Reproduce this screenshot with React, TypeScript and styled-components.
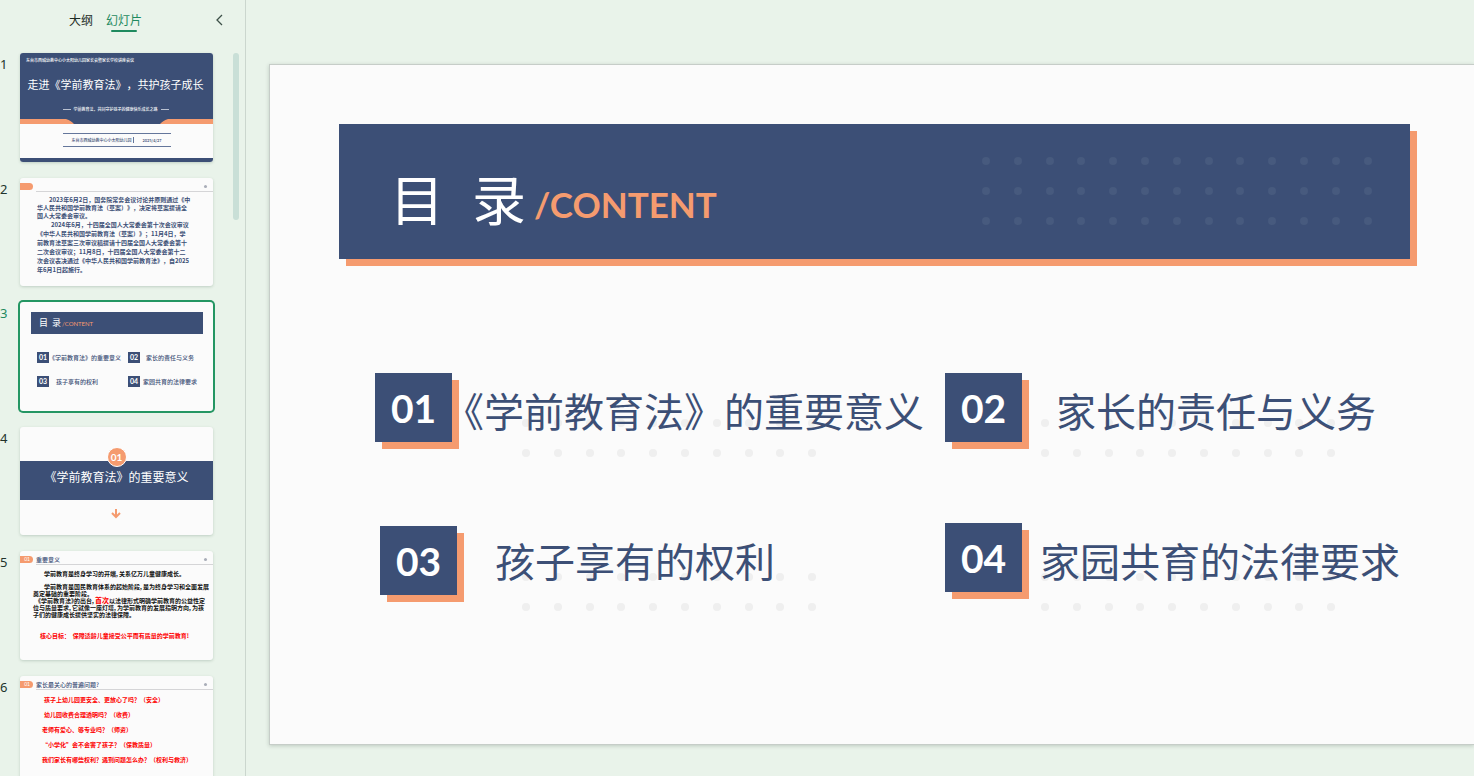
import React from "react";
import styled, { createGlobalStyle } from "styled-components";

const navy = "#3c4f76";
const orange = "#f59b6f";
const paper = "#fbfbfb";
const green = "#1f8a5f";
const cjk = '"Noto Sans CJK SC", sans-serif';
const geometric = 'Lato, "Noto Sans CJK SC", sans-serif';

const GlobalStyle = createGlobalStyle`
  * { box-sizing: border-box; }
  body {
    margin: 0;
    background: #e9f3ea;
    font-family: ${cjk};
    color: #22332c;
  }
  button {
    border: 0;
    padding: 0;
    background: none;
    color: inherit;
    font: inherit;
    cursor: pointer;
  }
  h1, h2, ol { margin: 0; padding: 0; font-weight: 400; }
  ol { list-style: none; }
`;

const Workspace = styled.div`
  display: flex;
  height: 100vh;
  overflow: hidden;
`;

/* ---------- side panel ---------- */

const Panel = styled.aside`
  flex: 0 0 246px;
  display: flex;
  flex-direction: column;
  border-right: 1px solid #cbd6ce;
  overflow: hidden;
`;

const PanelHeader = styled.header`
  flex: 0 0 53px;
  display: flex;
  justify-content: space-between;
  align-items: flex-start;
  padding: 10px 22px 0 68px;
`;

const Tabs = styled.nav`
  display: flex;
  gap: 12px;
`;

const Tab = styled.button<{ $active?: boolean }>`
  display: flex;
  flex-direction: column;
  align-items: center;
  font-size: 12px;
  line-height: 20px;
  color: ${(p) => (p.$active ? green : "#1d2b25")};
  &::after {
    content: "";
    width: 26px;
    height: 2px;
    border-radius: 1px;
    background: ${(p) => (p.$active ? green : "transparent")};
    align-self: center;
  }
`;

const Collapse = styled.button`
  display: flex;
  height: 20px;
  align-items: center;
`;

const PanelBody = styled.div`
  display: flex;
  flex: 1;
  min-height: 0;
  justify-content: space-between;
  padding-right: 6px;
`;

const ScrollThumb = styled.div`
  width: 6px;
  height: 167px;
  border-radius: 3px;
  background: #c9dfd7;
`;

const ThumbList = styled.ol`
  display: flex;
  flex-direction: column;
  gap: 16px;
`;

const ThumbRow = styled.li<{ $selected?: boolean }>`
  display: flex;
  font-family: "Noto Sans", sans-serif;
  font-size: 13px;
  line-height: 22px;
  color: ${(p) => (p.$selected ? green : "#22332c")};
`;

const ThumbNumber = styled.span`
  width: 20px;
`;

const Thumb = styled.button<{ $selected?: boolean }>`
  display: flex;
  flex-direction: column;
  align-items: stretch;
  width: 193px;
  aspect-ratio: 16 / 9;
  overflow: hidden;
  border-radius: 3px;
  background: ${paper};
  box-shadow: ${(p) => (p.$selected ? "0 0 0 2px #249663" : "0 1px 3px rgba(40, 80, 60, 0.22)")};
  font-family: ${cjk};
  color: ${navy};
  text-align: left;
  text-spacing-trim: space-all;
  white-space: nowrap;
`;

/* cover */

const CoverTop = styled.span`
  display: flex;
  flex-direction: column;
  height: 66px;
  background: ${navy};
  color: #fff;
`;

const Tiny = styled.span`
  font-size: 4px;
  line-height: 6px;
  font-weight: 500;
`;

const CoverSchool = styled(Tiny)`
  padding: 4px 6px 0;
`;

const CoverTitle = styled.span`
  margin-top: 13px;
  padding-right: 2px;
  text-align: center;
  font-size: 11px;
  line-height: 16px;
`;

const CoverSubtitle = styled(Tiny)`
  display: flex;
  justify-content: center;
  align-items: center;
  gap: 3px;
  margin-top: 14px;
  padding-right: 2px;
  &::before, &::after {
    content: "";
    width: 8px;
    height: 1px;
    background: #b9c1d1;
  }
`;

const CoverInfo = styled(Tiny)`
  display: flex;
  justify-content: center;
  align-items: center;
  align-self: center;
  gap: 8px;
  width: 108px;
  height: 14px;
  margin: 9px 0 11px;
  border: solid #64769b;
  border-width: 1px 0;
`;

const CoverHost = styled.span`
  padding-right: 2px;
  border-right: 1px solid #64769b;
`;

const CoverFoot = styled.span`
  flex: 1;
  background: ${navy};
`;

/* text pages */

const PageHead = styled.span`
  display: flex;
  align-items: flex-start;
  gap: 3px;
  height: 14px;
  padding-top: 5px;
`;

const PageTag = styled.span`
  width: 13px;
  height: 7px;
  padding-right: 3px;
  border-radius: 0 4px 4px 0;
  background: ${orange};
  color: #fff;
  font: 5px/7px ${geometric};
  text-align: right;
`;

const PageTitle = styled.span`
  flex: 1;
  display: flex;
  align-items: center;
  height: 9px;
  padding: 0 6px 1px 0;
  border-bottom: 1px solid #d5d5d7;
  font-size: 6px;
  line-height: 7px;
  font-weight: 500;
  &::after {
    content: "";
    width: 3px;
    height: 3px;
    margin-left: auto;
    border-radius: 50%;
    background: #a9adb8;
  }
`;

const Paragraph = styled.span<{
  $leading: number;
  $left: number;
  $top?: number;
  $color?: string;
  $compact?: boolean;
}>`
  display: block;
  margin-top: ${(p) => p.$top ?? 0}px;
  padding-left: ${(p) => p.$left}px;
  font-size: 6px;
  line-height: ${(p) => p.$leading}px;
  font-weight: 700;
  font-feature-settings: ${(p) => (p.$compact ? '"palt"' : "normal")};
  color: ${(p) => p.$color ?? "inherit"};
`;

const Line = styled.span<{ $indent?: number }>`
  display: block;
  padding-left: ${(p) => p.$indent ?? 0}px;
`;

const Stress = styled.span`
  color: #fe0000;
  font-size: 7px;
`;

/* contents page */

const MiniBanner = styled.span`
  display: flex;
  align-items: center;
  gap: 1px;
  height: 22px;
  margin: 10px 10px 0 11px;
  padding-left: 8px;
  background: ${navy};
  color: #fff;
  font-size: 9px;
  line-height: 12px;
`;

const MiniEnglish = styled.span`
  padding-top: 2px;
  color: ${orange};
  font: 6px/8px ${geometric};
`;

const MiniGrid = styled.span`
  display: grid;
  grid-template-columns: 91px 1fr;
  row-gap: 13px;
  padding: 18px 0 0 17px;
`;

const MiniEntry = styled.span<{ $gap: number }>`
  display: flex;
  align-items: center;
  gap: ${(p) => p.$gap}px;
  font-size: 6px;
  line-height: 11px;
  font-weight: 500;
`;

const MiniNumber = styled.span`
  width: 12px;
  background: ${navy};
  color: #fff;
  font: 700 7px/11px ${geometric};
  text-align: center;
`;

/* section page */

const SectionBand = styled.span`
  display: flex;
  flex-direction: column;
  align-items: center;
  height: 39px;
  margin-top: 34px;
  background: ${navy};
  color: #fff;
  font-size: 12px;
  line-height: 20px;
`;

const SectionBadge = styled.span`
  flex: none;
  width: 20px;
  height: 20px;
  margin-top: -14px;
  border: 1px solid #fff;
  border-radius: 50%;
  background: ${orange};
  font: 700 10px/18px ${geometric};
  text-align: center;
`;

const SectionArrow = styled.svg`
  align-self: center;
  margin: 9px 1px 0 0;
`;

/* ---------- slide ---------- */

const Stage = styled.main`
  flex: 1;
  min-width: 0;
  padding: 64px 0 0 23px;
`;

const Slide = styled.article`
  padding: 59px 64px 145px 69px;
  border: 1px solid #c6cdc8;
  border-right: 0;
  background: ${paper};
  box-shadow: 0 1px 4px rgba(40, 60, 50, 0.22);
`;

const Banner = styled.header`
  display: flex;
  align-items: center;
  justify-content: space-between;
  height: 135px;
  padding: 0 38px 0 51px;
  background: ${navy};
  box-shadow: 7px 7px 0 ${orange};
`;

const BannerTitle = styled.h1`
  display: flex;
  align-items: center;
  padding-top: 12px;
  color: #fff;
  font-size: 54px;
  line-height: 80px;
`;

const TitleWord = styled.span`
  display: flex;
  gap: 28px;
`;

const English = styled.span`
  padding: 12px 0 0 8px;
  color: ${orange};
  font: 700 35px/48px ${geometric};
`;

const Entries = styled.ol`
  display: grid;
  grid-template-columns: 114fr 93fr;
  row-gap: 74px;
  margin: 114px 0 0 36px;
`;

const Entry = styled.li<{ $inset: number }>`
  position: relative;
  display: flex;
  align-items: flex-start;
  height: 76px;
  padding-left: ${(p) => p.$inset}px;
`;

const NumberBox = styled.span<{ $drop: number }>`
  flex: none;
  width: 77px;
  height: 69px;
  margin-top: ${(p) => p.$drop}px;
  background: ${navy};
  box-shadow: 7px 7px 0 ${orange};
  color: #fff;
  font: 700 39px/71px ${geometric};
  text-align: center;
`;

const EntryText = styled.h2<{ $gap: number }>`
  position: relative;
  margin-left: ${(p) => p.$gap}px;
  font-size: 40px;
  line-height: 75px;
  color: ${navy};
  white-space: nowrap;
`;

const EntryDots = styled.svg<{ $left: number; $top: number }>`
  position: absolute;
  top: ${(p) => p.$top}px;
  left: ${(p) => p.$left}px;
`;

const dotGrid = (columns: number, rows: number, pitchX: number, pitchY: number, r: number) =>
  Array.from({ length: columns * rows }, (_, i) => (
    <circle
      key={i}
      cx={Math.round((i % columns) * pitchX) + r}
      cy={Math.floor(i / columns) * pitchY + r}
      r={r}
    />
  ));

const entries = [
  { no: "01", text: "《学前教育法》的重要意义", inset: 0, drop: 0, gap: -8, dots: [147, 46], mini: -1 },
  { no: "02", text: "家长的责任与义务", inset: 0, drop: 0, gap: 34, dots: [96, 46], mini: 6 },
  { no: "03", text: "孩子享有的权利", inset: 5, drop: 3, gap: 38, dots: [147, 50], mini: 7 },
  { no: "04", text: "家园共育的法律要求", inset: 0, drop: 0, gap: 18, dots: [96, 50], mini: 3 },
];

const CoverPage = () => (
  <>
    <CoverTop>
      <CoverSchool>东台市西城幼教中心小太阳幼儿园家长会暨家长学校讲座会议</CoverSchool>
      <CoverTitle>走进《学前教育法》，共护孩子成长</CoverTitle>
      <CoverSubtitle>学前教育法，共同守护孩子的健康快乐成长之路</CoverSubtitle>
    </CoverTop>
    <svg width="193" height="5" viewBox="0 0 193 5" aria-hidden="true">
      <rect width="193" height="5" fill={orange} />
      <path d="M46 0C50 1 52 3 54 5H140C142 3 144 1 148 0Z" fill={navy} />
    </svg>
    <CoverInfo>
      <CoverHost>东台市西城幼教中心小太阳幼儿园</CoverHost>
      <span>2025/4/27</span>
    </CoverInfo>
    <CoverFoot />
  </>
);

const NewsPage = () => (
  <>
    <PageHead>
      <PageTag />
      <PageTitle />
    </PageHead>
    <Paragraph $leading={8} $left={17} $top={4}>
      <Line $indent={12}>2023年6月2日，国务院常务会议讨论并原则通过《中</Line>
      <Line>华人民共和国学前教育法（草案）》，决定将草案提请全</Line>
      <Line>国人大常委会审议。</Line>
    </Paragraph>
    <Paragraph $leading={9} $left={17}>
      <Line $indent={14}>2024年6月，十四届全国人大常委会第十次会议审议</Line>
      <Line>《中华人民共和国学前教育法（草案）》；11月4日，学</Line>
      <Line>前教育法草案三次审议稿提请十四届全国人大常委会第十</Line>
      <Line>二次会议审议；11月8日，十四届全国人大常委会第十二</Line>
      <Line>次会议表决通过《中华人民共和国学前教育法》，自2025</Line>
      <Line>年6月1日起施行。</Line>
    </Paragraph>
  </>
);

const ContentsPage = () => (
  <>
    <MiniBanner>
      <span>目&nbsp; 录</span>
      <MiniEnglish>/CONTENT</MiniEnglish>
    </MiniBanner>
    <MiniGrid>
      {entries.map((e) => (
        <MiniEntry key={e.no} $gap={e.mini}>
          <MiniNumber>{e.no}</MiniNumber>
          <span>{e.text}</span>
        </MiniEntry>
      ))}
    </MiniGrid>
  </>
);

const SectionPage = () => (
  <>
    <SectionBand>
      <SectionBadge>01</SectionBadge>
      <span>《学前教育法》的重要意义</span>
    </SectionBand>
    <SectionArrow width="10" height="10" viewBox="0 0 10 10" fill="none" stroke={orange} strokeWidth="2" aria-hidden="true">
      <path d="M5 0V8M1 4L5 8L9 4" />
    </SectionArrow>
  </>
);

const MeaningPage = () => (
  <>
    <PageHead>
      <PageTag>01</PageTag>
      <PageTitle>重要意义</PageTitle>
    </PageHead>
    <Paragraph $compact $leading={7} $left={13} $top={5} $color="#111">
      <Line $indent={11}>学前教育是终身学习的开端，关系亿万儿童健康成长。</Line>
    </Paragraph>
    <Paragraph $compact $leading={7} $left={13} $top={6} $color="#111">
      <Line $indent={11}>学前教育是国民教育体系的起始阶段，是为终身学习和全面发展</Line>
      <Line>奠定基础的重要阶段。</Line>
      <Line $indent={5}>
        《学前教育法》的出台，<Stress>首次</Stress>以法律形式明确学前教育的公益性定
      </Line>
      <Line>位与质量要求，它就像一座灯塔，为学前教育的发展指明方向，为孩</Line>
      <Line>子们的健康成长提供坚实的法律保障。</Line>
    </Paragraph>
    <Paragraph $leading={7} $left={20} $top={14} $color="#fe0000">
      核心目标：&nbsp; 保障适龄儿童接受公平而有质量的学前教育!
    </Paragraph>
  </>
);

const QuestionsPage = () => (
  <>
    <PageHead>
      <PageTag>01</PageTag>
      <PageTitle>家长最关心的普遍问题?</PageTitle>
    </PageHead>
    <Paragraph $leading={15} $left={22} $top={2} $color="#fe0000">
      <Line $indent={2}>孩子上幼儿园更安全、更放心了吗？（安全）</Line>
      <Line $indent={2}>幼儿园收费合理透明吗？（收费）</Line>
      <Line>老师有爱心、够专业吗？（师资）</Line>
      <Line>“小学化”会不会害了孩子？（保教质量）</Line>
      <Line>我们家长有哪些权利？遇到问题怎么办？（权利与救济）</Line>
    </Paragraph>
  </>
);

const pages = [CoverPage, NewsPage, ContentsPage, SectionPage, MeaningPage, QuestionsPage];
const current = 2;

export default function App() {
  return (
    <Workspace lang="zh-CN">
      <GlobalStyle />
      <Panel>
        <PanelHeader>
          <Tabs>
            <Tab>大纲</Tab>
            <Tab $active>幻灯片</Tab>
          </Tabs>
          <Collapse aria-label="收起">
            <svg width="7" height="12" viewBox="0 0 7 12" fill="none" stroke="#3d5048" strokeWidth="1.3">
              <path d="M6 1L1 6L6 11" />
            </svg>
          </Collapse>
        </PanelHeader>
        <PanelBody>
          <ThumbList>
            {pages.map((Page, i) => (
              <ThumbRow key={i} $selected={i === current}>
                <ThumbNumber>{i + 1}</ThumbNumber>
                <Thumb $selected={i === current}>
                  <Page />
                </Thumb>
              </ThumbRow>
            ))}
          </ThumbList>
          <ScrollThumb />
        </PanelBody>
      </Panel>
      <Stage>
        <Slide>
          <Banner>
            <BannerTitle>
              <TitleWord>
                <span>目</span>
                <span>录</span>
              </TitleWord>
              <English>/CONTENT</English>
            </BannerTitle>
            <svg width="390" height="69" fill="#475a7e" aria-hidden="true">
              {dotGrid(13, 3, 31.8, 30, 4)}
            </svg>
          </Banner>
          <Entries>
            {entries.map((e) => (
              <Entry key={e.no} $inset={e.inset}>
                <EntryDots $left={e.dots[0]} $top={e.dots[1]} width="296" height="39" fill="#efefef" aria-hidden="true">
                  {dotGrid(10, 2, 31.8, 30, 4)}
                </EntryDots>
                <NumberBox $drop={e.drop}>{e.no}</NumberBox>
                <EntryText $gap={e.gap}>{e.text}</EntryText>
              </Entry>
            ))}
          </Entries>
        </Slide>
      </Stage>
    </Workspace>
  );
}
